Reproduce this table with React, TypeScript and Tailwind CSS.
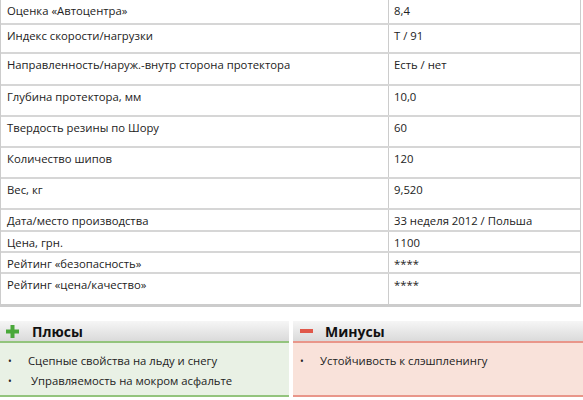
import React from "react";

const rows: [string, string, string][] = [
  ["Оценка «Автоцентра»", "8,4", "h-[23px]"],
  ["Индекс скорости/нагрузки", "T / 91", "h-[29px]"],
  ["Направленность/наруж.-внутр сторона протектора", "Есть / нет", "h-[32px]"],
  ["Глубина протектора, мм", "10,0", "h-[31px]"],
  ["Твердость резины по Шору", "60", "h-[31px]"],
  ["Количество шипов", "120", "h-[31px]"],
  ["Вес, кг", "9,520", "h-[31px]"],
  ["Дата/место производства", "33 неделя 2012 / Польша", "h-[22px]"],
  ["Цена, грн.", "1100", "h-[21px]"],
  ["Рейтинг «безопасность»", "****", "h-[21px]"],
  ["Рейтинг «цена/качество»", "****", "h-[32px]"],
];

export default function App() {
  return (
    <div
      className="w-[583px] h-[400px] bg-white text-[#222] overflow-hidden"
      style={{ fontFamily: '"Open Sans", "Noto Sans", sans-serif' }}
    >
      <div className="w-[581px] border border-[#ccc] border-b-[3px] border-t-0">
        {rows.map(([k, v, h], i) => (
          <div
            key={i}
            className={`flex ${h} ${i > 0 ? "border-t-2 border-[#d6d6d6]" : ""} text-[11.3px] leading-[16px]`}
          >
            <div className="w-[388px] border-r border-[#ccc] pl-[6px] pt-[3px]">{k}</div>
            <div className="flex-1 pl-[5px] pt-[3px]">{v}</div>
          </div>
        ))}
      </div>
      <div className="flex gap-[4px] mt-[14px]">
        <div className="w-[289px]">
          <div className="h-[22px] bg-gradient-to-b from-[#f6f6f6] to-[#dadada] border-b-2 border-[#93c47d] flex items-center">
            <svg width="13" height="13" viewBox="0 0 13 13" className="ml-[6px]">
              <path d="M4.5 0h4v4.5h4.5v4h-4.5v4.5h-4v-4.5h-4.5v-4h4.5z" fill="#4aa83a" />
            </svg>
            <span className="ml-[13px] font-bold text-[14px] text-[#111]">Плюсы</span>
          </div>
          <div className="h-[54px] bg-[#e9f1e5] border-b-2 border-[#93c47d] text-[11.3px] leading-[19px] pt-[8px] pl-[8px]">
            <div className="flex items-baseline"><span className="w-[20px] text-[10px]">•</span><span>Сцепные свойства на льду и снегу</span></div>
            <div className="flex items-baseline"><span className="w-[23px] text-[10px]">•</span><span>Управляемость на мокром асфальте</span></div>
          </div>
        </div>
        <div className="flex-1">
          <div className="h-[22px] bg-gradient-to-b from-[#f6f6f6] to-[#dadada] border-b-2 border-[#e9968a] flex items-center">
            <div className="ml-[7px] w-[13px] h-[4px] bg-[#e0584a]" />
            <span className="ml-[12px] font-bold text-[14px] text-[#111]">Минусы</span>
          </div>
          <div className="h-[54px] bg-[#f9e2da] border-b-2 border-[#e9968a] text-[11.3px] leading-[19px] pt-[8px] pl-[7px]">
            <div className="flex items-baseline"><span className="w-[20px] text-[10px]">•</span><span>Устойчивость к слэшпленингу</span></div>
          </div>
        </div>
      </div>
    </div>
  );
}
